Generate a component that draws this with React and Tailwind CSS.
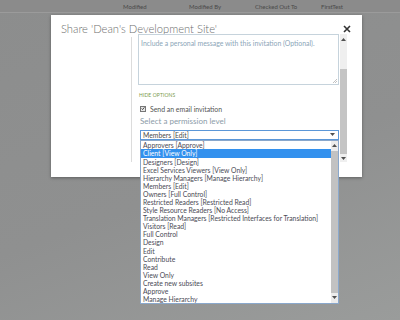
import React from 'react';

const roles = [
  'Approvers [Approve]',
  'Client [View Only]',
  'Designers [Design]',
  'Excel Services Viewers [View Only]',
  'Hierarchy Managers [Manage Hierarchy]',
  'Members [Edit]',
  'Owners [Full Control]',
  'Restricted Readers [Restricted Read]',
  'Style Resource Readers [No Access]',
  'Translation Managers [Restricted Interfaces for Translation]',
  'Visitors [Read]',
  'Full Control',
  'Design',
  'Edit',
  'Contribute',
  'Read',
  'View Only',
  'Create new subsites',
  'Approve',
  'Manage Hierarchy',
];

const Arrow = ({ up }) => (
  <svg width="5" height="3" viewBox="0 0 5 3" className="block">
    <polygon points={up ? '0,3 5,3 2.5,0' : '0,0 5,0 2.5,3'} fill="#505050" />
  </svg>
);

const App = () => {
  return (
    <div
      className="w-[400px] h-[320px] overflow-hidden bg-[linear-gradient(160deg,#8c8d8d_0%,#8f9090_55%,#9a9c9b_100%)]"
      style={{ fontFamily: 'Lato, "Open Sans", sans-serif' }}
    >
      {/* list column headers behind the overlay */}
      <div className="h-[13px] flex items-center text-[6px] text-[#4a4a4a] border-b border-[#9b9b9b] bg-[#8b8b8b]">
        <span className="ml-[123px] w-[66px]">Modified</span>
        <span className="w-[66px]">Modified By</span>
        <span className="w-[66px]">Checked Out To</span>
        <span>FirstTest</span>
      </div>

      {/* dialog */}
      <div className="relative ml-[51px] mt-[2px] w-[311px] h-[162px] bg-white shadow-[0_1px_3px_rgba(0,0,0,0.35)] flex flex-col">
        <div className="h-[19px] flex items-end justify-between pl-[10px] pr-[11px]">
          <span className="text-[11.2px] leading-none text-[#6e6e6e] font-light">
            Share 'Dean's Development Site'
          </span>
          <svg width="8" height="8" viewBox="0 0 8 8" className="mb-[1px]">
            <path d="M1 1 L7 7 M7 1 L1 7" stroke="#333" strokeWidth="1.6" />
          </svg>
        </div>

        <div className="flex h-[128px]">
          <div className="w-[81px] border-r border-[#dcdcdc] mt-[3px]" />
          <div className="flex-1 pl-[6px] flex">
            <div className="w-[201px] flex flex-col">
              <div className="relative h-[51px] border border-[#c6d3dc] px-[2px] pt-[3px] text-[6.9px] text-[#8ca6b8] whitespace-nowrap">
                Include a personal message with this invitation (Optional).
                <svg width="4" height="4" viewBox="0 0 4 4" className="absolute right-[1px] bottom-[1px]">
                  <path d="M4 0 L0 4 M4 2 L2 4" stroke="#999" strokeWidth="0.6" />
                </svg>
              </div>
              <div className="mt-[7px] ml-[1px] text-[5px] tracking-[0.1px] text-[#7b9a4c]">HIDE OPTIONS</div>
              <div className="mt-[4px] ml-[2px] flex items-center gap-[4px]">
                <span className="w-[6px] h-[6px] border border-[#777] bg-[#e8e8e8] flex items-center justify-center">
                  <svg width="5" height="5" viewBox="0 0 5 5">
                    <path d="M0.8 2.5 L2 3.8 L4.3 1" stroke="#222" strokeWidth="1" fill="none" />
                  </svg>
                </span>
                <span className="text-[6.9px] text-[#555]">Send an email invitation</span>
              </div>
              <div className="mt-[1px] ml-[2px] text-[8px] text-[#8b9ba8]">Select a permission level</div>
              <div className="relative mt-[3px] ml-[2px] h-[10px] border border-[#5b97d8] flex items-center justify-between pl-[2px] pr-[3px] text-[6.8px] text-[#4a4a4a]">
                <span>Members [Edit]</span>
                <Arrow />

                {/* open select list */}
                <div className="absolute left-[-1px] top-[9px] w-[199px] h-[164px] bg-white border border-[#8aa8cc] flex z-10">
                  <div className="flex-1 flex flex-col pt-[0.5px]">
                    {roles.map((r) => (
                      <div
                        key={r}
                        className={`h-[8.1px] leading-[8.1px] pl-[2px] text-[6.8px] whitespace-nowrap ${
                          r === 'Client [View Only]' ? 'bg-[#3391ee] text-white' : 'text-[#4a4a55]'
                        }`}
                      >
                        {r}
                      </div>
                    ))}
                  </div>
                  <div className="w-[7px] bg-[#ececec] flex flex-col items-center">
                    <div className="h-[10px] flex items-center">
                      <Arrow up />
                    </div>
                    <div className="w-full flex-1 bg-[#c2c2c2]" />
                    <div className="h-[10px] flex items-center">
                      <Arrow />
                    </div>
                  </div>
                </div>
              </div>
            </div>

            {/* dialog content scrollbar */}
            <div className="ml-[1px] w-[7px] bg-[#efefef] flex flex-col items-center">
              <div className="h-[10px] flex items-center">
                <Arrow up />
              </div>
              <div className="h-[25px]" />
              <div className="w-full flex-1 bg-[#c4c4c4]" />
              <div className="h-[8px] flex items-center">
                <Arrow />
              </div>
            </div>
          </div>
        </div>
      </div>
    </div>
  );
};

export default App;
